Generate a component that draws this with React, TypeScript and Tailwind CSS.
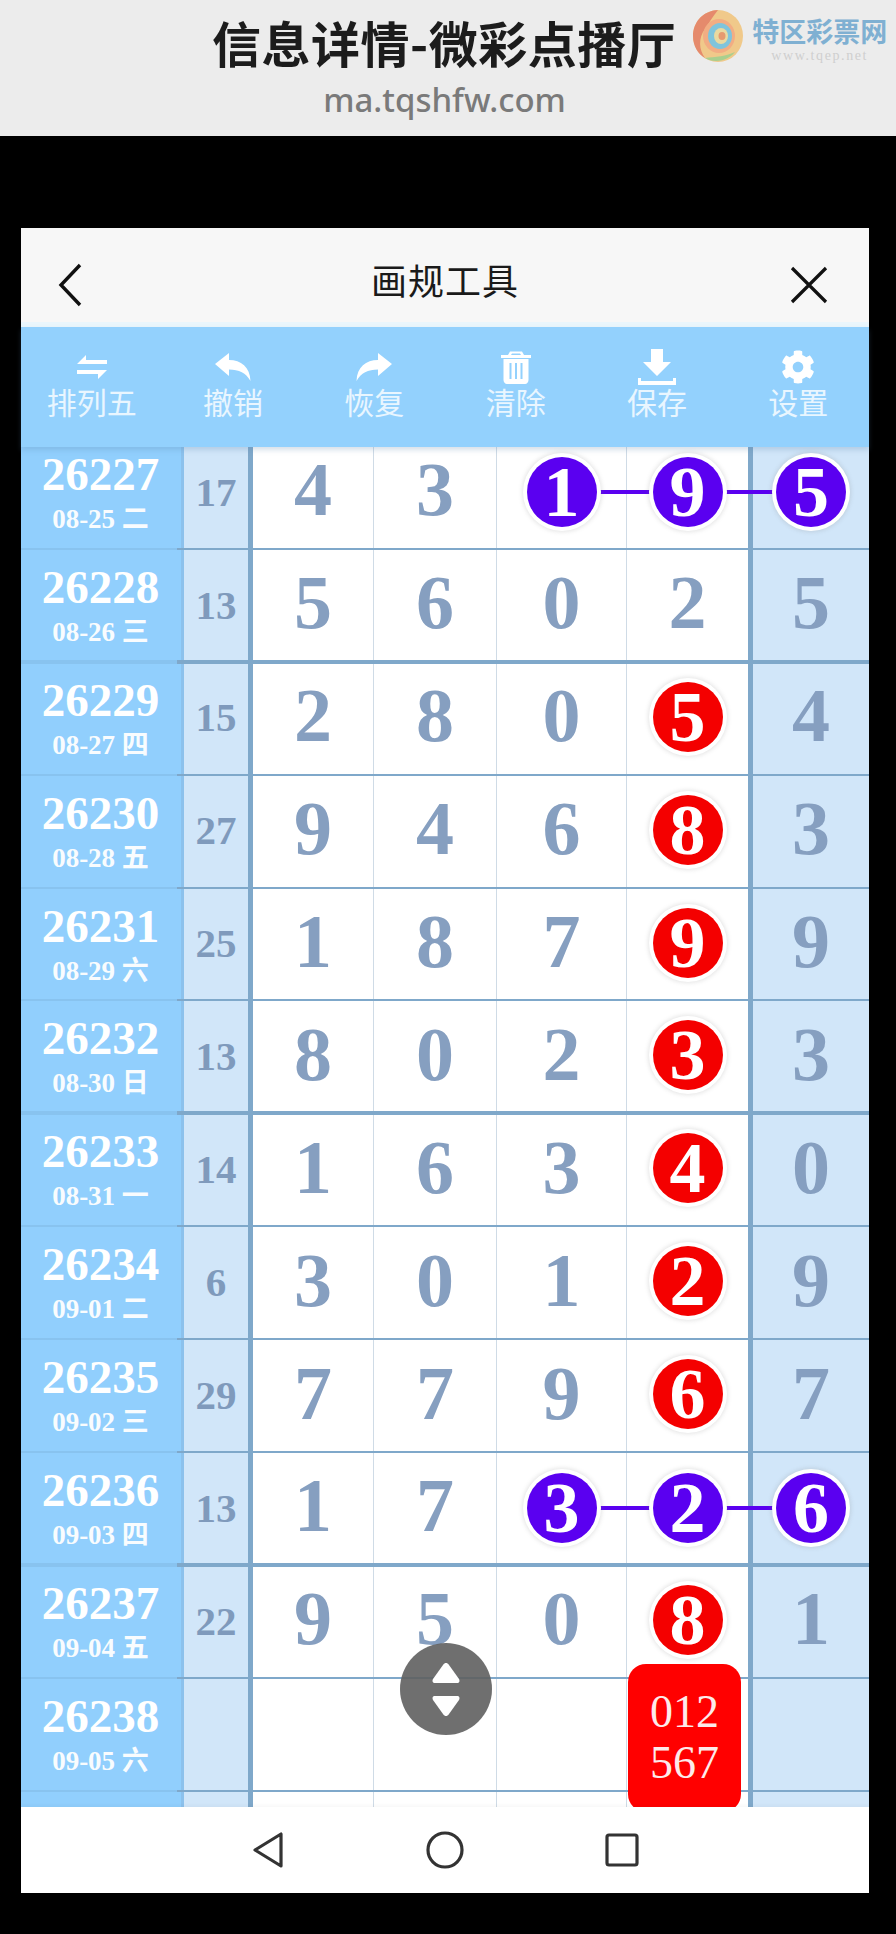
import React from 'react';
import { FaCog } from 'react-icons/fa';

type Mark = 'p' | 'r' | undefined;

interface Row {
  no: string;
  date: string;
  sum: string;
  nums: string[];
  marks: Mark[];
  thick?: boolean;
}

const rows: Row[] = [
  { no: '26227', date: '08-25 二', sum: '17', nums: ['4', '3', '1', '9', '5'], marks: [undefined, undefined, 'p', 'p', 'p'] },
  { no: '26228', date: '08-26 三', sum: '13', nums: ['5', '6', '0', '2', '5'], marks: [], thick: true },
  { no: '26229', date: '08-27 四', sum: '15', nums: ['2', '8', '0', '5', '4'], marks: [undefined, undefined, undefined, 'r'] },
  { no: '26230', date: '08-28 五', sum: '27', nums: ['9', '4', '6', '8', '3'], marks: [undefined, undefined, undefined, 'r'] },
  { no: '26231', date: '08-29 六', sum: '25', nums: ['1', '8', '7', '9', '9'], marks: [undefined, undefined, undefined, 'r'] },
  { no: '26232', date: '08-30 日', sum: '13', nums: ['8', '0', '2', '3', '3'], marks: [undefined, undefined, undefined, 'r'], thick: true },
  { no: '26233', date: '08-31 一', sum: '14', nums: ['1', '6', '3', '4', '0'], marks: [undefined, undefined, undefined, 'r'] },
  { no: '26234', date: '09-01 二', sum: '6', nums: ['3', '0', '1', '2', '9'], marks: [undefined, undefined, undefined, 'r'] },
  { no: '26235', date: '09-02 三', sum: '29', nums: ['7', '7', '9', '6', '7'], marks: [undefined, undefined, undefined, 'r'] },
  { no: '26236', date: '09-03 四', sum: '13', nums: ['1', '7', '3', '2', '6'], marks: [undefined, undefined, 'p', 'p', 'p'], thick: true },
  { no: '26237', date: '09-04 五', sum: '22', nums: ['9', '5', '0', '8', '1'], marks: [undefined, undefined, undefined, 'r'] },
  { no: '26238', date: '09-05 六', sum: '', nums: ['', '', '', '', ''], marks: [] },
  { no: '', date: '', sum: '', nums: ['', '', '', '', ''], marks: [] },
];

const cellClass = [
  'w-[121px] border-r border-r-[#cfdbe6] bg-white',
  'w-[123px] border-r border-r-[#cfdbe6] bg-white',
  'w-[130px] border-r border-r-[#cfdbe6] bg-white',
  'w-[126px] border-r-[5px] border-r-[#7fa8ca] bg-white',
  'w-[116px] bg-[#d1e6f9]',
];

const Num = ({ value, mark }: { value: string; mark: Mark }) => {
  if (!mark) {
    return <span className="-mt-[6px] text-[76px] leading-none font-bold text-[#869fc0]">{value}</span>;
  }
  return (
    <span
      className={`relative z-[2] flex h-[70px] w-[70px] items-center justify-center rounded-full text-[72px] leading-none font-bold text-white shadow-[0_0_0_4px_#fff,0_0_4px_5px_rgba(120,120,120,0.2)] ${
        mark === 'p' ? 'bg-[#5a00f0]' : '-mt-[3px] bg-[#f40000]'
      }`}
    >
      {value}
    </span>
  );
};

const TableRow = ({ row }: { row: Row }) => {
  const linked = row.marks[2] === 'p';
  return (
    <div className="relative flex h-[112.9px]">
      <div className="flex w-[163px] flex-col items-center border-r-[3px] border-r-[#8cc1ec] bg-[#91cffd] pr-[1px] text-white">
        <span className="mt-[16px] text-[47px] leading-[44px] font-bold">{row.no}</span>
        <span className="mt-[8px] text-[27px] leading-[30px] font-bold opacity-95">{row.date}</span>
      </div>
      <div className="flex w-[69px] items-center justify-center border-r-[5px] border-r-[#7fa8ca] bg-[#d1e6f9] text-[41px] font-bold text-[#7f9abc]">
        {row.sum}
      </div>
      {row.nums.map((n, i) => (
        <div key={i} className={`flex items-center justify-center ${cellClass[i]}`}>
          <Num value={n} mark={row.marks[i]} />
        </div>
      ))}
      {/* row rules sit over the cell backgrounds */}
      <div className={`absolute left-0 z-[1] w-[156px] bg-[#88c3ef] ${row.thick ? '-bottom-[2px] h-[4px]' : '-bottom-[1px] h-[2px]'}`} />
      <div className={`absolute right-0 left-[156px] z-[1] bg-[#7fa8ca] ${row.thick ? '-bottom-[2px] h-[4px]' : '-bottom-[1px] h-[2px]'}`} />
      {linked && <div className="absolute top-[54px] left-[541px] z-[1] h-[4px] w-[250px] bg-[#5a00f0]" />}
    </div>
  );
};

const Tool = ({ icon, label }: { icon: React.ReactNode; label: string }) => (
  <div className="flex flex-col items-center pt-[21px]">
    <div className="flex h-[38px] items-center justify-center text-white">{icon}</div>
    <span className="-mt-[3px] text-[30px] leading-[36px] text-[#e9f6ff]">{label}</span>
  </div>
);

const Logo = () => (
  <div className="-mt-[15px] ml-[16px] flex items-start self-start">
    <svg width="52" height="54" viewBox="0 0 52 54" className="mt-[10px]">
      <ellipse cx="26" cy="27" rx="25" ry="26" fill="#f0c98a" />
      <path d="M26 1C10 2 1 14 1 27c0 10 5 18 12 22-6-8-7-20 0-29 4-6 8-13 13-19z" fill="#e58a6c" />
      <path d="M13 49c8 5 22 4 30-6-8 4-20 5-30 6z" fill="#a9cf8e" />
      <ellipse cx="27" cy="27" rx="16" ry="17" fill="#f2ad83" />
      <ellipse cx="28" cy="27" rx="12" ry="13" fill="#7fc4dc" />
      <ellipse cx="29" cy="27" rx="7" ry="8" fill="#e9d9a0" />
      <ellipse cx="30" cy="27" rx="3.5" ry="4" fill="#e59a70" />
    </svg>
    <div className="ml-[8px] flex flex-col items-center pt-[17px]">
      <span className="text-[27px] leading-[29px] font-bold whitespace-nowrap text-[#7fb0d2]">特区彩票网</span>
      <span className="mt-[3px] text-[14px] leading-[16px] tracking-[1.6px] whitespace-nowrap text-[#cfcfcf] [font-family:'Liberation_Serif',serif]">www.tqep.net</span>
    </div>
  </div>
);

export default function App() {
  return (
    <div className="min-h-[1934px] w-[896px] overflow-hidden bg-black [font-family:'Noto_Sans_CJK_SC',sans-serif]">
      {/* top banner */}
      <header className="relative flex h-[136px] flex-col items-center bg-[#ececec]">
        <div className="mt-[14px] flex h-[58px] w-full items-center">
          <span className="-mt-[4px] ml-[212px] text-[49px] leading-none font-bold tracking-[0.5px] whitespace-nowrap text-[#1c1c1c]">信息详情-微彩点播厅</span>
          <Logo />
        </div>
        <div className="mt-[8px] mr-[7px] text-[33px] leading-[40px] font-medium text-[#7a7a7a] [font-family:'Noto_Sans',sans-serif]">ma.tqshfw.com</div>
      </header>

      <div className="mt-[92px] ml-[21px] w-[848px]">
        {/* title bar */}
        <div className="flex h-[99px] items-center justify-between border-b-[5px] border-b-[#eaf6fc] bg-[#f7f7f7] pt-[20px] pr-[41px] pl-[37px]">
          <svg width="24" height="44" viewBox="0 0 24 44" fill="none" stroke="#111" strokeWidth="3.4">
            <path d="M22 2 3 22l19 20" />
          </svg>
          <span className="-mt-[12px] ml-[18px] text-[36px] leading-none tracking-[1px] text-[#1a1a1a]">画规工具</span>
          <svg width="38" height="38" viewBox="0 0 38 38" fill="none" stroke="#111" strokeWidth="3.2">
            <path d="M2 2l34 34M36 2 2 36" />
          </svg>
        </div>

        {/* toolbar */}
        <div className="relative z-10 grid h-[120px] grid-cols-6 bg-[#93d1fd] shadow-[0_3px_5px_rgba(90,130,170,0.25)]">
          <Tool
            label="排列五"
            icon={
              <svg width="30" height="24" viewBox="0 0 30 24" fill="white">
                <path d="M9 0v5h21v4H0zM0 15h30l-9 9v-5H0z" />
              </svg>
            }
          />
          <Tool
            label="撤销"
            icon={
              <svg width="36" height="28" viewBox="0 0 36 28" fill="white">
                <path d="M0 11 14 0v7c12 0 21 7 21.500 21C31 20 24 16.500 14 16.500V23z" />
              </svg>
            }
          />
          <Tool
            label="恢复"
            icon={
              <svg width="36" height="28" viewBox="0 0 36 28" fill="white">
                <path d="M36 11 22 0v7C10 7 1 14 .5 28 5 20 12 16.500 22 16.500V23z" />
              </svg>
            }
          />
          <Tool
            label="清除"
            icon={
              <svg width="30" height="34" viewBox="0 0 30 34" fill="white">
                <path d="M9 1.500h12l2 3.500h7v3H0V5h7zM11 3.500 10 5h10l-1-1.500z" />
                <path fillRule="evenodd" d="M2.500 9h25v21c0 2-1.500 4-3.500 4H6c-2 0-3.500-2-3.500-4zM8.500 13v16h2V13zM14 13v16h2V13zM19.500 13v16h2V13z" />
              </svg>
            }
          />
          <Tool
            label="保存"
            icon={
              <svg width="38" height="36" viewBox="0 0 38 36" fill="white">
                <path d="M13 0h12v13h8L19 27 5 13h8zM0 29h3v3h32v-3h3v7H0z" />
              </svg>
            }
          />
          <Tool label="设置" icon={<FaCog size={34} />} />
        </div>

        {/* lottery table */}
        <div className="relative h-[1360px] overflow-hidden bg-white [font-family:'Liberation_Serif','Noto_Sans_CJK_SC',serif]">
          <div className="-mt-[11px]">
            {rows.map((row, i) => (
              <TableRow key={i} row={row} />
            ))}
          </div>

          <div className="absolute top-[1217px] left-[607px] z-[3] flex h-[148px] w-[113px] flex-col items-center rounded-[18px] bg-[#ff0000] pt-[22px] text-[46px] leading-[51px] text-[#fdeaea]">
            <span>012</span>
            <span>567</span>
          </div>

          <div className="absolute top-[1196px] left-[379px] z-[4] flex h-[92px] w-[92px] flex-col items-center justify-center gap-[13px] rounded-full bg-[#5f5f5f]/90">
            <svg width="28" height="20" viewBox="0 0 28 20" fill="white">
              <path d="M14 0c1 0 2 .6 3 2l10 14c1 2 .5 4-2 4H3c-2.500 0-3-2-2-4L11 2c1-1.400 2-2 3-2z" />
            </svg>
            <svg width="28" height="20" viewBox="0 0 28 20" fill="white">
              <path d="M14 20c-1 0-2-.6-3-2L1 4C0 2 .5 0 3 0h22c2.500 0 3 2 2 4L17 18c-1 1.400-2 2-3 2z" />
            </svg>
          </div>
        </div>

        {/* android nav */}
        <nav className="relative z-[5] flex h-[86px] items-center bg-white pl-[231px] shadow-[0_-2px_4px_rgba(0,0,0,0.03)]">
          <svg width="32" height="38" viewBox="0 0 32 38" fill="none" stroke="#333" strokeWidth="3.2" strokeLinejoin="round">
            <path d="M29 3v32L3 19z" />
          </svg>
          <svg width="38" height="38" viewBox="0 0 38 38" fill="none" stroke="#333" strokeWidth="3.2" className="ml-[142px]">
            <circle cx="19" cy="19" r="17" />
          </svg>
          <svg width="34" height="34" viewBox="0 0 34 34" fill="none" stroke="#333" strokeWidth="3.2" strokeLinejoin="round" className="ml-[141px]">
            <rect x="2" y="2" width="30" height="30" rx="2" />
          </svg>
        </nav>
      </div>
    </div>
  );
}
